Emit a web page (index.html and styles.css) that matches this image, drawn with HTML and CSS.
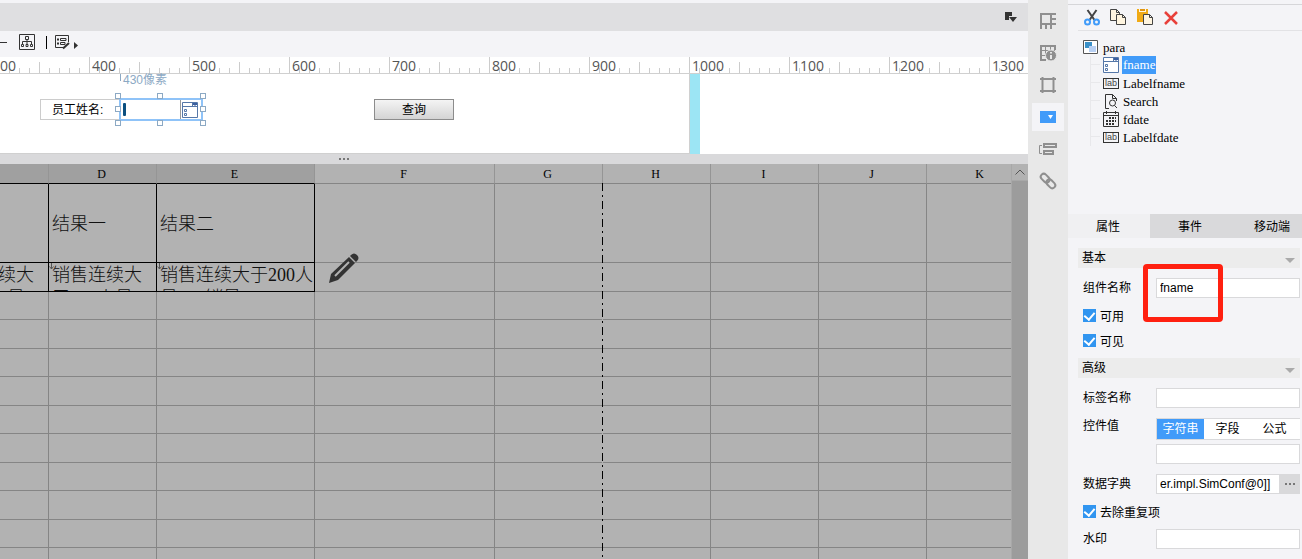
FILE: index.html
```html
<!DOCTYPE html>
<html lang="zh-CN">
  <head>
    <meta charset="UTF-8" />
    <meta name="viewport" content="width=device-width, initial-scale=1.0" />
    <title>para</title>
    <link rel="stylesheet" href="styles.css">
  </head>
  <body>
    <main class="editor">
      <div class="tabbar">
        <button class="icon-btn" aria-label="tabs">
          <svg width="12" height="10" viewBox="0 0 12 10"><path d="M0 0H7V4H4V8H0Z M4 5H12L8 10Z" fill="#333"/></svg>
        </button>
      </div>
      <div class="toolbar">
        <button class="icon-btn" aria-label="line">
          <svg width="7" height="16" viewBox="0 0 7 16"><path d="M0 8.5H7" stroke="#333"/></svg>
        </button>
        <button class="icon-btn" aria-label="layout">
          <svg width="16" height="16" viewBox="0 0 16 16" fill="none" stroke="#333"><path d="M.5 .5H15.500V15.500H.5Z M6.500 2.500H9.500V5.500H6.500Z M8 5.500V10 M3.500 10V7.500H12.500V10 M2.500 10.500H4.500V12.500H2.500Z M7 10.500H9V12.500H7Z M11.500 10.500H13.500V12.500H11.500Z"/></svg>
        </button>
        <span class="sep"></span>
        <button class="icon-btn" aria-label="form">
          <svg width="24" height="16" viewBox="0 0 24 16" fill="none" stroke="#333"><path d="M8 13.500H.5V1.500H13.500V8"/><path d="M5.500 4.500H11V6.500H5.500Z M5.500 8.500H10V10.500H5.500Z"/><path d="M2 5.500H4M2 9.500H4" stroke-width="2"/><path d="M8 14.500L14 9" stroke-width="2"/><path d="M19 8V15L23 11.500Z" fill="#333" stroke="none"/></svg>
        </button>
      </div>
      <div class="ruler">
        <span>300</span><span>400</span><span>500</span><span>600</span><span>700</span><span>800</span><span>900</span><span>1000</span><span>1100</span><span>1200</span><span>1300</span>
      </div>
      <div class="canvas">
        <div class="canvas-form"></div>
        <div class="canvas-edge"></div>
        <span class="hint">430像素</span>
        <label class="w-label" for="emp">员工姓名:</label>
        <div class="w-combo">
          <input id="emp" type="text" />
          <svg width="20" height="18" viewBox="0 0 20 18"><path d="M1.500 1.500H16.500V16.500H1.500ZM1.500 5.500H16.500M11.500 1.500V5.500" fill="none" stroke="#5577a8"/><path d="M12 2H16V4H15L14 5L13 4H12Z" fill="#3a5fa0"/><path d="M3.500 8.500H5.500V10.500H3.500ZM3.500 12.500H5.500V14.500H3.500Z" fill="none" stroke="#5577a8"/></svg>
          <i class="caret"></i>
          <i class="h t l"></i><i class="h t c"></i><i class="h t r"></i>
          <i class="h m l"></i><i class="h m r"></i>
          <i class="h b l"></i><i class="h b c"></i><i class="h b r"></i>
        </div>
        <button class="w-query">查询</button>
      </div>
      <div class="splitter"><svg width="12" height="4" viewBox="0 0 12 4"><path d="M1 2H3M5 2H7M9 2H11" stroke="#777" stroke-width="2"/></svg></div>
      <div class="sheet">
        <div class="grid">
          <table>
            <colgroup><col class="n"><col class="n"><col class="e"><col class="f"><col class="n"><col class="n"><col class="n"><col class="n"><col class="n"></colgroup>
            <thead>
              <tr><th class="on"></th><th class="on">D</th><th class="on">E</th><th>F</th><th>G</th><th>H</th><th>I</th><th>J</th><th>K</th></tr>
            </thead>
            <tbody>
              <tr class="tall"><td class="box"></td><td class="box">结果一</td><td class="box">结果二</td><td></td><td></td><td></td><td></td><td></td><td></td></tr>
              <tr class="data">
                <td class="box"><div>销售连续大于200人员</div></td>
                <td class="box"><svg class="arrow" width="6" height="7" viewBox="0 0 6 7"><path d="M2.500 0V6M.5 3.500L2.500 6L4.500 3.500" fill="none" stroke="#555"/></svg><div>销售连续大于200人员</div></td>
                <td class="box"><svg class="arrow" width="6" height="7" viewBox="0 0 6 7"><path d="M2.500 0V6M.5 3.500L2.500 6L4.500 3.500" fill="none" stroke="#555"/></svg><div>销售连续大于200人员200销量二</div></td>
                <td></td><td></td><td></td><td></td><td></td><td></td>
              </tr>
              <tr><td></td><td></td><td></td><td></td><td></td><td></td><td></td><td></td><td></td></tr>
              <tr><td></td><td></td><td></td><td></td><td></td><td></td><td></td><td></td><td></td></tr>
              <tr><td></td><td></td><td></td><td></td><td></td><td></td><td></td><td></td><td></td></tr>
              <tr><td></td><td></td><td></td><td></td><td></td><td></td><td></td><td></td><td></td></tr>
              <tr><td></td><td></td><td></td><td></td><td></td><td></td><td></td><td></td><td></td></tr>
              <tr><td></td><td></td><td></td><td></td><td></td><td></td><td></td><td></td><td></td></tr>
              <tr><td></td><td></td><td></td><td></td><td></td><td></td><td></td><td></td><td></td></tr>
              <tr><td></td><td></td><td></td><td></td><td></td><td></td><td></td><td></td><td></td></tr>
              <tr><td></td><td></td><td></td><td></td><td></td><td></td><td></td><td></td><td></td></tr>
              <tr><td></td><td></td><td></td><td></td><td></td><td></td><td></td><td></td><td></td></tr>
            </tbody>
          </table>
          <div class="page-break"></div>
          <svg class="pencil" width="30" height="31" viewBox="0 0 30 31"><path d="M0 30L2 21L20 4L26 10L9 27Z M22 2Q25-1 28 2Q31 5 28 8L27 9L21 3Z" fill="#333"/><path d="M6 23L20 9" stroke="#b2b2b2" stroke-width="2"/></svg>
        </div>
        <div class="scroll">
          <button class="icon-btn" aria-label="up"><svg width="10" height="6" viewBox="0 0 10 6"><path d="M.5 5.500L5 1L9.500 5.500" fill="none" stroke="#555"/></svg></button>
        </div>
      </div>
    </main>

    <nav class="rail">
      <button aria-label="cell"><svg width="16" height="16" viewBox="0 0 16 16"><path d="M1 16V1H16M11 1V16M1 11H16M6 11V16M11 6H16" /></svg></button>
      <button aria-label="info"><svg width="16" height="16" viewBox="0 0 16 16"><path d="M6 15H1V1H15V5"/><path d="M1 5.500H15M1 10.500H6M5.500 1V11M10.500 1V5" stroke-width="1"/><circle cx="11" cy="10.500" r="5.500" fill="#8f8f8f" stroke="#e8e8e8" stroke-width="1"/><path d="M11 7V8.500M11 10V14" stroke="#e8e8e8"/></svg></button>
      <button aria-label="frame"><svg width="16" height="16" viewBox="0 0 16 16"><path d="M2.500 0V16M13.500 0V16M0 2H16M0 14H16"/></svg></button>
      <button class="active" aria-label="widget"><svg width="16" height="12" viewBox="0 0 16 12"><path d="M0 0H16V12H0Z" fill="#419bf9" stroke="none"/><path d="M8 4H13L10.500 8Z" fill="#fff" stroke="none"/></svg></button>
      <button aria-label="conditions"><svg width="18" height="12" viewBox="0 0 18 12"><path d="M3 2.500H.5V10.500H3" stroke-width="1"/><path d="M5 1H17V4H5ZM5 8H14V11H5Z"/></svg></button>
      <button aria-label="link"><svg width="16" height="16" viewBox="0 0 16 16"><g transform="rotate(45 8 8)"><rect x="-1" y="5" width="10" height="6" rx="3"/><rect x="7" y="5" width="10" height="6" rx="3"/></g></svg></button>
    </nav>

    <aside class="side">
      <div class="side-tools">
        <button class="icon-btn" aria-label="cut"><svg width="16" height="17" viewBox="0 0 16 17" fill="none"><path d="M3.500 1L10.500 11M12.500 1L5.500 11" stroke="#444" stroke-width="2"/><circle cx="3.500" cy="13" r="2.500" stroke="#419bf9" stroke-width="2"/><circle cx="12.500" cy="13" r="2.500" stroke="#419bf9" stroke-width="2"/></svg></button>
        <button class="icon-btn" aria-label="copy"><svg width="17" height="17" viewBox="0 0 17 17" fill="#fff5e0" stroke="#444"><path d="M.5 .5H6.500L9.500 3.500V11.500H.5Z"/><path d="M6.500 5.500H12.500L15.500 8.500V15.500H6.500Z"/><path d="M6.500 .5V3.500H9.500M12.500 5.500V8.500H15.500" fill="none"/></svg></button>
        <button class="icon-btn" aria-label="paste"><svg width="17" height="17" viewBox="0 0 17 17"><path d="M0 0H11V13H0Z" fill="#f0aa15"/><path d="M2 0H9V3H2Z" fill="#fff5e0"/><path d="M3 0H8V2H3Z" fill="#e09510"/><path d="M6.500 5.500H12.500L15.500 8.500V15.500H6.500ZM12.500 5.500V8.500H15.500" fill="#fff5e0" stroke="#444"/></svg></button>
        <button class="icon-btn" aria-label="delete"><svg width="14" height="14" viewBox="0 0 14 14"><path d="M1 1L13 13M13 1L1 13" stroke="#e8403a" stroke-width="2.500"/></svg></button>
      </div>
      <ul class="tree">
        <li class="root"><svg width="15" height="14" viewBox="0 0 15 14"><path d="M.5 .5H14.500V13.500H.5Z" fill="#fff" stroke="#555"/><path d="M2 2H9V8H2Z" fill="#3a90c8"/><path d="M6 6H13V12H6Z" fill="#b8d0f4"/></svg><span>para</span></li>
        <li class="sel"><svg width="16" height="16" viewBox="0 0 16 16"><path d="M.5 .5H15.500V15.500H.5ZM.5 4.500H15.500M10.500 .5V4.500" fill="#fff" stroke="#5577a8"/><path d="M11 1H15V3H14L13 4L12 3H11Z" fill="#3a5fa0"/><path d="M2.500 7.500H4.500V9.500H2.500ZM2.500 11.500H4.500V13.500H2.500Z" fill="none" stroke="#5577a8"/></svg><span>fname</span></li>
        <li><i class="lab">lab</i><span>Labelfname</span></li>
        <li><svg width="16" height="15" viewBox="0 0 16 15" fill="none" stroke="#333"><path d="M6 14.500H2.500V.5H9.500L13.500 4.500V7M9.500 .5V4.500H13.500"/><circle cx="9.500" cy="9" r="3"/><path d="M11.500 11.500L14 14"/></svg><span>Search</span></li>
        <li><svg width="16" height="16" viewBox="0 0 16 16" fill="none" stroke="#333"><path d="M.5 1.500H15.500V15.500H.5ZM.5 4.500H15.500M3.500 0V3M12.500 0V3"/><path d="M6 7H13M3 10H13M3 13H11" stroke-width="2" stroke-dasharray="2 1"/></svg><span>fdate</span></li>
        <li><i class="lab">lab</i><span>Labelfdate</span></li>
      </ul>
      <div class="tabs">
        <button class="current">属性</button>
        <button>事件</button>
        <button>移动端</button>
      </div>
      <form class="props">
        <h2>基本</h2>
        <div class="row marked"><label for="name">组件名称</label><input id="name" type="text" value="fname" /><div class="mark"></div></div>
        <label class="check"><input type="checkbox" checked />可用</label>
        <label class="check"><input type="checkbox" checked />可见</label>
        <h2>高级</h2>
        <div class="row"><label for="tag">标签名称</label><input id="tag" type="text" /></div>
        <div class="row value">
          <label for="val">控件值</label>
          <div class="stack">
            <div class="seg"><button type="button" class="current">字符串</button><button type="button">字段</button><button type="button">公式</button></div>
            <input id="val" type="text" />
          </div>
        </div>
        <div class="row"><label for="dict">数据字典</label><input id="dict" class="dict" type="text" value="er.impl.SimConf@0]]" /><button type="button" class="more" aria-label="more"><svg width="12" height="4" viewBox="0 0 12 4"><path d="M1 2H3M5 2H7M9 2H11" stroke="#777" stroke-width="2"/></svg></button></div>
        <label class="check"><input type="checkbox" checked />去除重复项</label>
        <div class="row"><label for="mark">水印</label><input id="mark" type="text" /></div>
      </form>
    </aside>
  </body>
</html>
```
FILE: styles.css
```css
* {
  box-sizing: border-box;
  margin: 0;
  padding: 0;
}
body {
  display: grid;
  grid-template-columns: minmax(0, 1fr) 40px 234px;
  height: 100vh;
  overflow: hidden;
  font-family: "Liberation Sans", "Noto Sans CJK SC", sans-serif;
  font-size: 12px;
  color: #000;
  background-color: #f4f4f7;
}
button, input {
  font: inherit;
  color: inherit;
  border: none;
  outline: none;
}
button {
  background: none;
}
svg {
  display: block;
  flex: none;
  overflow: visible;
}
.icon-btn {
  display: flex;
  align-items: center;
  justify-content: center;
}

/* editor */
.editor {
  display: flex;
  flex-direction: column;
  height: 100vh;
  overflow: hidden;
}
.tabbar {
  display: flex;
  flex: none;
  justify-content: flex-end;
  align-items: center;
  height: 31px;
  padding-right: 11px;
  border-top: 3px solid #f4f4f7;
  background-color: #dfdfe1;
}
.toolbar {
  display: flex;
  flex: none;
  align-items: center;
  height: 26px;
  padding-bottom: 4px;
}
.toolbar .icon-btn + .icon-btn {
  margin-left: 12px;
}
.toolbar .sep {
  width: 1px;
  height: 13px;
  margin: 0 8px 0 11px;
  background-color: #000;
}
.ruler {
  display: flex;
  flex: none;
  height: 17px;
  margin-left: -11px;
  border-bottom: 1px solid #d0d0d0;
  background-color: #fff;
}
.ruler span {
  flex: none;
  width: 100px;
  padding-left: 3px;
  font: 14px/18px "Open Sans", sans-serif;
  color: #555;
  background:
    linear-gradient(#ccc, #ccc) 0 0 / 1px 16px no-repeat,
    linear-gradient(#ccc, #ccc) 50px 100% / 1px 11px no-repeat,
    repeating-linear-gradient(90deg, #ccc 0 1px, transparent 1px 10px) 0 100% / 100% 5px no-repeat;
}
.canvas {
  position: relative;
  flex: none;
  height: 80px;
  background-color: #fff;
}
.canvas-form {
  position: absolute;
  left: 0;
  top: 0;
  width: 690px;
  height: 80px;
  border-bottom: 1px solid #d0d0d0;
  border-right: 1px solid #d0d0d0;
}
.canvas-edge {
  position: absolute;
  left: 690px;
  top: 0;
  width: 10px;
  height: 80px;
  background-color: #9ce5f4;
}
.hint {
  position: absolute;
  left: 120px;
  top: 0;
  height: 7px;
  padding-left: 2px;
  border-left: 1px solid #8ca9c4;
  line-height: 13px;
  color: #8ca9c4;
}
.w-label {
  position: absolute;
  left: 40px;
  top: 25px;
  width: 80px;
  height: 21px;
  padding-left: 11px;
  border: 1px solid #ccc;
  line-height: 20px;
}
.w-combo {
  position: absolute;
  left: 119px;
  top: 24px;
  display: flex;
  align-items: center;
  width: 84px;
  height: 23px;
  border: 2px solid #8fc3f8;
}
.w-combo input {
  flex: 1;
  width: 0;
  height: 19px;
  border-right: 1px solid #999;
}
.caret {
  position: absolute;
  left: 2px;
  top: 3px;
  width: 3px;
  height: 13px;
  border-radius: 1px;
  background-color: #0b4f80;
}
.h {
  position: absolute;
  width: 6px;
  height: 6px;
  border: 1px solid #8ca9c4;
  background-color: #fff;
}
.h.t { top: -7px; }
.h.m { top: 6px; }
.h.b { bottom: -7px; }
.h.l { left: -6px; }
.h.c { left: 36px; }
.h.r { right: -5px; }
.w-query {
  position: absolute;
  left: 374px;
  top: 25px;
  width: 80px;
  height: 21px;
  padding-bottom: 2px;
  border: 1px solid #8c8c8c;
  background-image: linear-gradient(#f4f4f4, #d4d4d4);
}
.splitter {
  display: flex;
  flex: none;
  align-items: center;
  justify-content: center;
  height: 10px;
  padding-right: 340px;
  background-color: #d9d9db;
}

/* sheet */
.sheet {
  display: flex;
  flex: 1;
  min-height: 0;
  background-color: #b2b2b2;
}
.grid {
  position: relative;
  flex: 1;
  overflow: hidden;
}
table {
  table-layout: fixed;
  width: 1094px;
  margin-left: -59px;
  border-collapse: separate;
  border-spacing: 0;
}
.n { width: 108px; }
.e { width: 158px; }
.f { width: 180px; }
th {
  height: 20px;
  padding: 2px 2px 0 0;
  border-right: 1px solid #959595;
  border-bottom: 1px solid #858585;
  font: 12px/17px "Liberation Serif", serif;
}
th.on {
  background-color: #a0a0a0;
  border-bottom-color: #000;
}
td {
  height: 29px;
  border-right: 1px solid #858585;
  border-bottom: 1px solid #858585;
  padding: 0 0 0 3px;
  font: 18px/27px "Liberation Serif", "Noto Sans CJK SC", serif;
  font-weight: 300;
  color: #111;
}
tbody tr:nth-child(odd) td {
  height: 28px;
}
tbody tr.tall td {
  height: 79px;
  padding-top: 2px;
}
td.box {
  border-color: #000;
}
.data td {
  position: relative;
  vertical-align: top;
}
.data td div {
  height: 28px;
  padding-top: 1px;
  overflow: hidden;
  word-break: break-all;
  line-height: 23px;
}
.arrow {
  position: absolute;
  left: 0;
  top: 0;
}
.page-break {
  position: absolute;
  left: 602px;
  top: 19px;
  bottom: 0;
  width: 1px;
  background: repeating-linear-gradient(#000 0 8px, #b2b2b2 8px 12px, #000 12px 14px, #b2b2b2 14px 18px);
}
.pencil {
  position: absolute;
  left: 329px;
  top: 89px;
}
.scroll {
  width: 17px;
  border-left: 1px solid #a8a8a8;
  background-color: #9c9c9c;
}
.scroll button {
  width: 100%;
  height: 17px;
  border-bottom: 1px solid #a8a8a8;
  background-color: #b2b2b2;
}

/* icon rail */
.rail {
  display: flex;
  flex-direction: column;
  align-items: center;
  gap: 4px;
  padding-top: 7px;
  background-color: #e8e8e8;
}
.rail button {
  display: flex;
  align-items: center;
  justify-content: center;
  width: 32px;
  height: 28px;
}
.rail svg {
  fill: none;
  stroke: #8f8f8f;
  stroke-width: 2px;
}
.rail .active {
  background-color: #f4f4f7;
}

/* side panel */
.side {
  display: flex;
  flex-direction: column;
  margin-top: 4px;
  border-top: 1px solid #d6d6d9;
  overflow: hidden;
}
.side-tools {
  display: flex;
  align-items: center;
  gap: 10px;
  flex: none;
  height: 26px;
  margin-left: 10px;
  padding-left: 6px;
  border-bottom: 1px solid #e2e2e5;
}
.tree {
  flex: none;
  height: 183px;
  padding: 7px 0 0 15px;
  list-style: none;
  font: 13px/17px "Liberation Serif", serif;
}
.tree li {
  display: flex;
  align-items: center;
  gap: 3px;
  height: 18px;
  margin-left: 7px;
  border-left: 1px solid #e8e8eb;
}
.tree li::before {
  content: "";
  width: 9px;
  height: 1px;
  border-top: 1px solid #e8e8eb;
}
.tree .root {
  margin-left: 0;
  border-left: none;
}
.tree .root::before {
  display: none;
}
.tree span {
  padding: 0 1px;
}
.root span {
  margin-left: 1px;
}
.sel span {
  padding: 0 1px 1px;
  color: #fff;
  background-color: #419bf9;
}
.lab {
  width: 16px;
  height: 11px;
  border: 1px solid #333;
  font: 9px/9px "Liberation Sans", sans-serif;
  text-align: center;
  color: #444;
}
.tabs {
  display: flex;
  flex: none;
  background-color: #d9d9db;
}
.tabs button {
  flex: none;
  width: 82px;
  height: 24px;
  padding: 0 2px 2px 0;
}
.tabs .current {
  background-color: #f0f0f2;
}
.props {
  display: flex;
  flex-direction: column;
  padding: 10px 2px 0 10px;
}
.props h2 {
  display: flex;
  justify-content: space-between;
  align-items: center;
  height: 20px;
  margin-bottom: 5px;
  padding: 0 5px 3px 4px;
  font-size: 12px;
  font-weight: normal;
  background-color: #ececec;
}
.props h2::after {
  content: "";
  margin-top: 8px;
  border: 5px solid transparent;
  border-top-color: #aaa;
  border-bottom: none;
}
.check + h2 {
  margin-top: 5px;
}
.row {
  display: flex;
  flex: none;
  margin: 5px 0;
  padding-left: 5px;
  line-height: 20px;
}
.row > label {
  flex: none;
  width: 73px;
}
.row input {
  flex: 1;
  min-width: 0;
  width: 100%;
  height: 20px;
  padding: 0 3px;
  border: 1px solid #d9d9db;
  background-color: #fff;
}
.marked {
  position: relative;
}
.mark {
  position: absolute;
  left: 65px;
  top: -14px;
  width: 80px;
  height: 58px;
  border: 5px solid #ff2010;
  border-radius: 4px;
}
.check {
  display: flex;
  align-items: center;
  gap: 4px;
  height: 25px;
  padding-left: 5px;
}
.check input {
  appearance: none;
  display: grid;
  place-items: center;
  width: 13px;
  height: 13px;
  background-color: #3195f0;
}
.check input:checked::after {
  content: "";
  width: 5px;
  height: 8px;
  margin-bottom: 2px;
  border: solid #fff;
  border-width: 0 2px 2px 0;
  transform: rotate(40deg);
}
.value > label {
  line-height: 16px;
}
.row + .row {
  margin-top: 5px;
}
.stack {
  display: flex;
  flex: 1;
  flex-direction: column;
  gap: 4px;
}
.stack input {
  flex: none;
}
.seg {
  display: flex;
  height: 22px;
  padding-right: 2px;
  border: 1px solid #d9d9db;
  border-right: none;
  background-color: #fff;
}
.seg button {
  flex: 1;
}
.seg .current {
  color: #fff;
  background-color: #419bf9;
}
.row .dict {
  border-right: none;
}
.more {
  display: flex;
  align-items: center;
  justify-content: center;
  width: 21px;
  background-color: #d9d9db;
}
```
